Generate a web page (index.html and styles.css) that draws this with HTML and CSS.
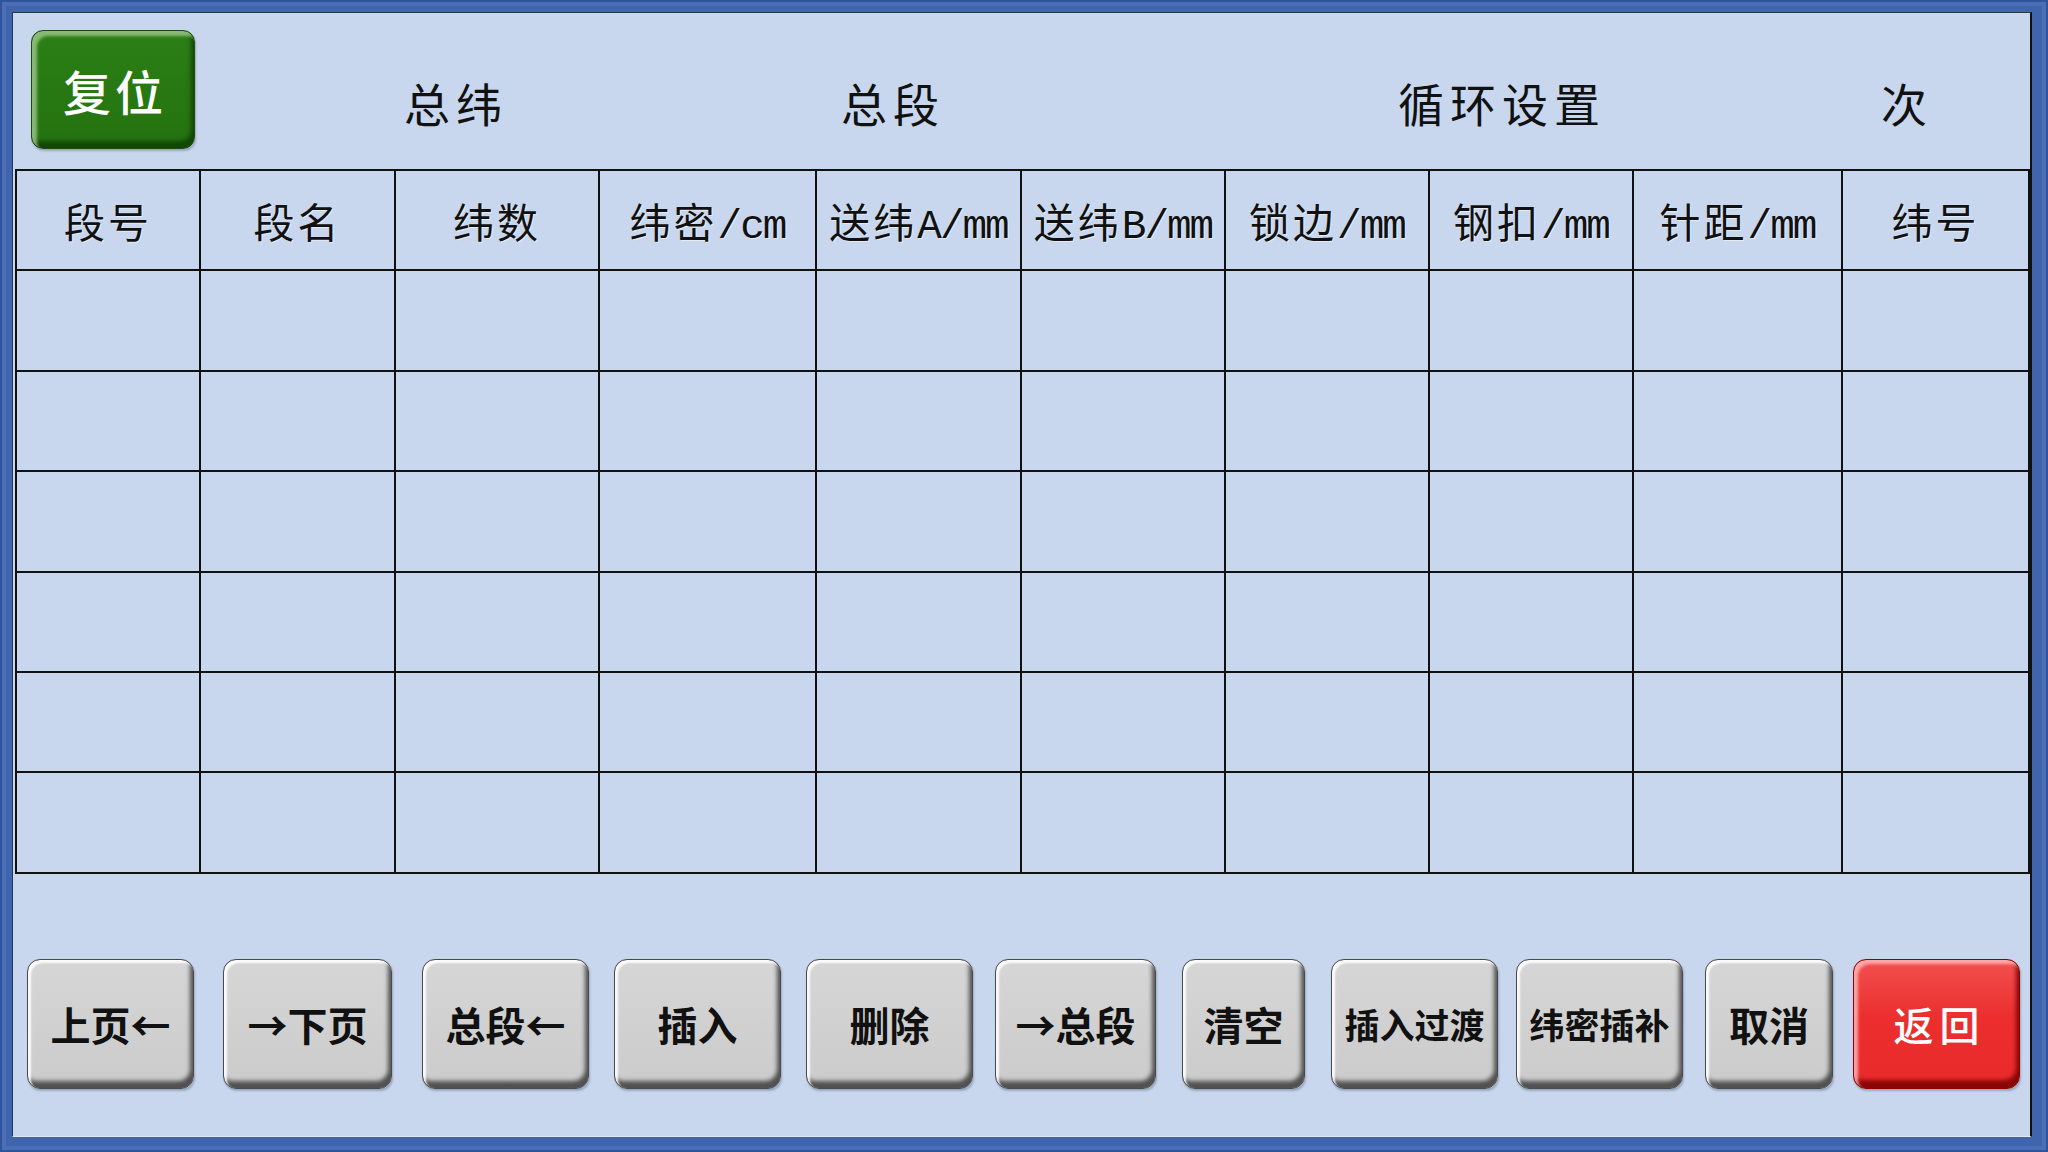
FILE: index.html
```html
<!DOCTYPE html>
<html>
<head>
    <meta charset="utf-8">
    <link rel="stylesheet" href="styles.css">
</head>
<body>
    <div class="frame">
        <div class="panel">
            <!-- horní lišta: reset a souhrnné hodnoty -->
            <div class="summary">
                <div class="reset-cell"><button class="reset">复位</button></div>
                <span class="caption">总纬</span>
                <span class="value"></span>
                <span class="caption">总段</span>
                <span class="value"></span>
                <span class="caption caption-wide">循环设置</span>
                <span class="value"></span>
                <span class="caption">次</span>
                <span class="value"></span>
            </div>

            <table class="segments">
                <colgroup>
                    <col class="col-seg-no">
                    <col class="col-seg-name">
                    <col class="col-count">
                    <col class="col-density">
                    <col class="col-feed-a">
                    <col class="col-feed-b">
                    <col class="col-lock">
                    <col class="col-reed">
                    <col class="col-pitch">
                    <col class="col-weft-no">
                </colgroup>
                <thead>
                    <tr>
                        <th>段号</th>
                        <th>段名</th>
                        <th>纬数</th>
                        <th>纬密<span class="unit">/cm</span></th>
                        <th>送纬<span class="unit">A/mm</span></th>
                        <th>送纬<span class="unit">B/mm</span></th>
                        <th>锁边<span class="unit">/mm</span></th>
                        <th>钢扣<span class="unit">/mm</span></th>
                        <th>针距<span class="unit">/mm</span></th>
                        <th>纬号</th>
                    </tr>
                </thead>
                <tbody id="segment-rows">
                    <!-- prázdné řádky se doplní skriptem -->
                </tbody>
            </table>

            <div class="keys">
                <button class="key">上页←</button>
                <button class="key key-wide">→下页</button>
                <button class="key">总段←</button>
                <button class="key">插入</button>
                <button class="key">删除</button>
                <button class="key key-arrow">→总段</button>
                <button class="key key-short">清空</button>
                <button class="key key-small-text">插入过渡</button>
                <button class="key key-small-text">纬密插补</button>
                <button class="key key-mid">取消</button>
                <button class="key key-back">返回</button>
            </div>
        </div>
    </div>
    <script>
        // šest prázdných řádků tabulky segmentů
        const rows = document.getElementById("segment-rows");
        for (let i = 0; i < 6; i++) {
            const tr = document.createElement("tr");
            for (let j = 0; j < 10; j++) {
                tr.appendChild(document.createElement("td"));
            }
            rows.appendChild(tr);
        }
    </script>
</body>
</html>
```

FILE: styles.css
```css
/* Styly obrazovky segmentů */
body {
    margin: 0;
    font-family: "Noto Sans CJK SC", sans-serif;
}
.frame {
    height: 1152px;
    box-sizing: border-box;
    padding: 12px 16px 15px 12px;
    background: #4065ad;
    box-shadow: inset 0 0 0 2px #2f549c, inset 0 0 0 6px #4a6fb6;
}
.panel {
    height: 100%;
    box-sizing: border-box;
    display: flex;
    flex-direction: column;
    background-color: #c8d7ee;
    border-top: 1px solid #2a3550;
    border-left: 1px solid #2a3550;
    border-right: 2px solid #111;
    border-bottom: 1px solid #dde7f5;
}
.summary {
    height: 156px;
    display: grid;
    grid-template-columns: 367px 152px 285px 152px 421px 224px 217px 152px 1fr;
    align-items: start;
}
.reset-cell {
    padding: 17px 0 0 18px;
}
.reset {
    width: 164px;
    height: 119px;
    padding: 0 0 0 4px;
    border: 1px solid #1d4a10;
    border-radius: 12px;
    background: linear-gradient(#2b7f15, #247210);
    box-shadow: inset 5px 5px 3px rgba(170, 205, 150, 0.75), inset -3px -7px 4px rgba(15, 60, 5, 0.8), 1px 2px 2px rgba(60, 80, 110, 0.35);
    color: #fff;
    font: 500 48px "Noto Sans CJK SC", sans-serif;
    letter-spacing: 4px;
}
.caption {
    padding-top: 61px;
    text-align: center;
    font-size: 46px;
    line-height: 56px;
    letter-spacing: 6px;
    color: #111;
    white-space: nowrap;
}
.segments {
    margin-left: 2px;
    width: 2015px;
    border-collapse: collapse;
    table-layout: fixed;
}
.col-seg-no { width: 184px; }
.col-seg-name { width: 195px; }
.col-count { width: 204px; }
.col-density { width: 217px; }
.col-feed-a { width: 205px; }
.col-feed-b { width: 204px; }
.col-lock { width: 204px; }
.col-reed { width: 204px; }
.col-pitch { width: 209px; }
.segments tr {
    height: 100.4px;
}
.segments th, .segments td {
    border: 2px solid #111;
    padding: 0;
}
.segments th {
    font-weight: 400;
    font-size: 41px;
    letter-spacing: 3px;
    color: #111;
    white-space: nowrap;
    text-shadow: 1px 1px 0 rgba(255, 255, 255, 0.5);
}
.unit {
    font-family: "Liberation Mono", monospace;
    letter-spacing: -2px;
}
/* spodní řada tlačítek */
.keys {
    margin-top: 85px;
    padding: 0 11px 0 14px;
    display: flex;
}
.key {
    flex: none;
    width: 167px;
    height: 130px;
    padding: 0;
    border: 1px solid #4a4a4a;
    border-radius: 13px;
    background: linear-gradient(#d6d6d6, #cbcbcb);
    box-shadow: inset 3px 3px 2px rgba(255, 255, 255, 0.9), inset -3px -7px 4px rgba(50, 50, 50, 0.8), 1px 2px 2px rgba(60, 80, 110, 0.35);
    color: #111;
    font: 700 40px "Noto Sans CJK SC", sans-serif;
    white-space: nowrap;
    cursor: pointer;
}
.key + .key {
    margin-left: 25px;
}
.key:nth-child(2) { margin-left: 29px; }
.key:nth-child(3) { margin-left: 30px; }
.key:nth-child(6) { margin-left: 22px; }
.key:nth-child(7),
.key:nth-child(8) { margin-left: 26px; }
.key:nth-child(9) { margin-left: 18px; }
.key:nth-child(10) { margin-left: 22px; }
.key:nth-child(11) { margin-left: 20px; }
.key-wide {
    width: 169px;
}
.key-arrow {
    width: 161px;
}
.key-short {
    width: 123px;
}
.key-mid {
    width: 128px;
}
.key-small-text {
    font-size: 35px;
}
.key-back {
    padding-left: 6px;
    border-color: #8c0000;
    background: linear-gradient(#f25050, #ec2e2e 45%, #ea2a2a);
    box-shadow: inset 4px 4px 3px rgba(255, 190, 190, 0.8), inset -3px -8px 4px rgba(120, 0, 0, 0.85), 1px 2px 2px rgba(60, 80, 110, 0.35);
    color: #fff;
    font-weight: 500;
    letter-spacing: 6px;
}
```
